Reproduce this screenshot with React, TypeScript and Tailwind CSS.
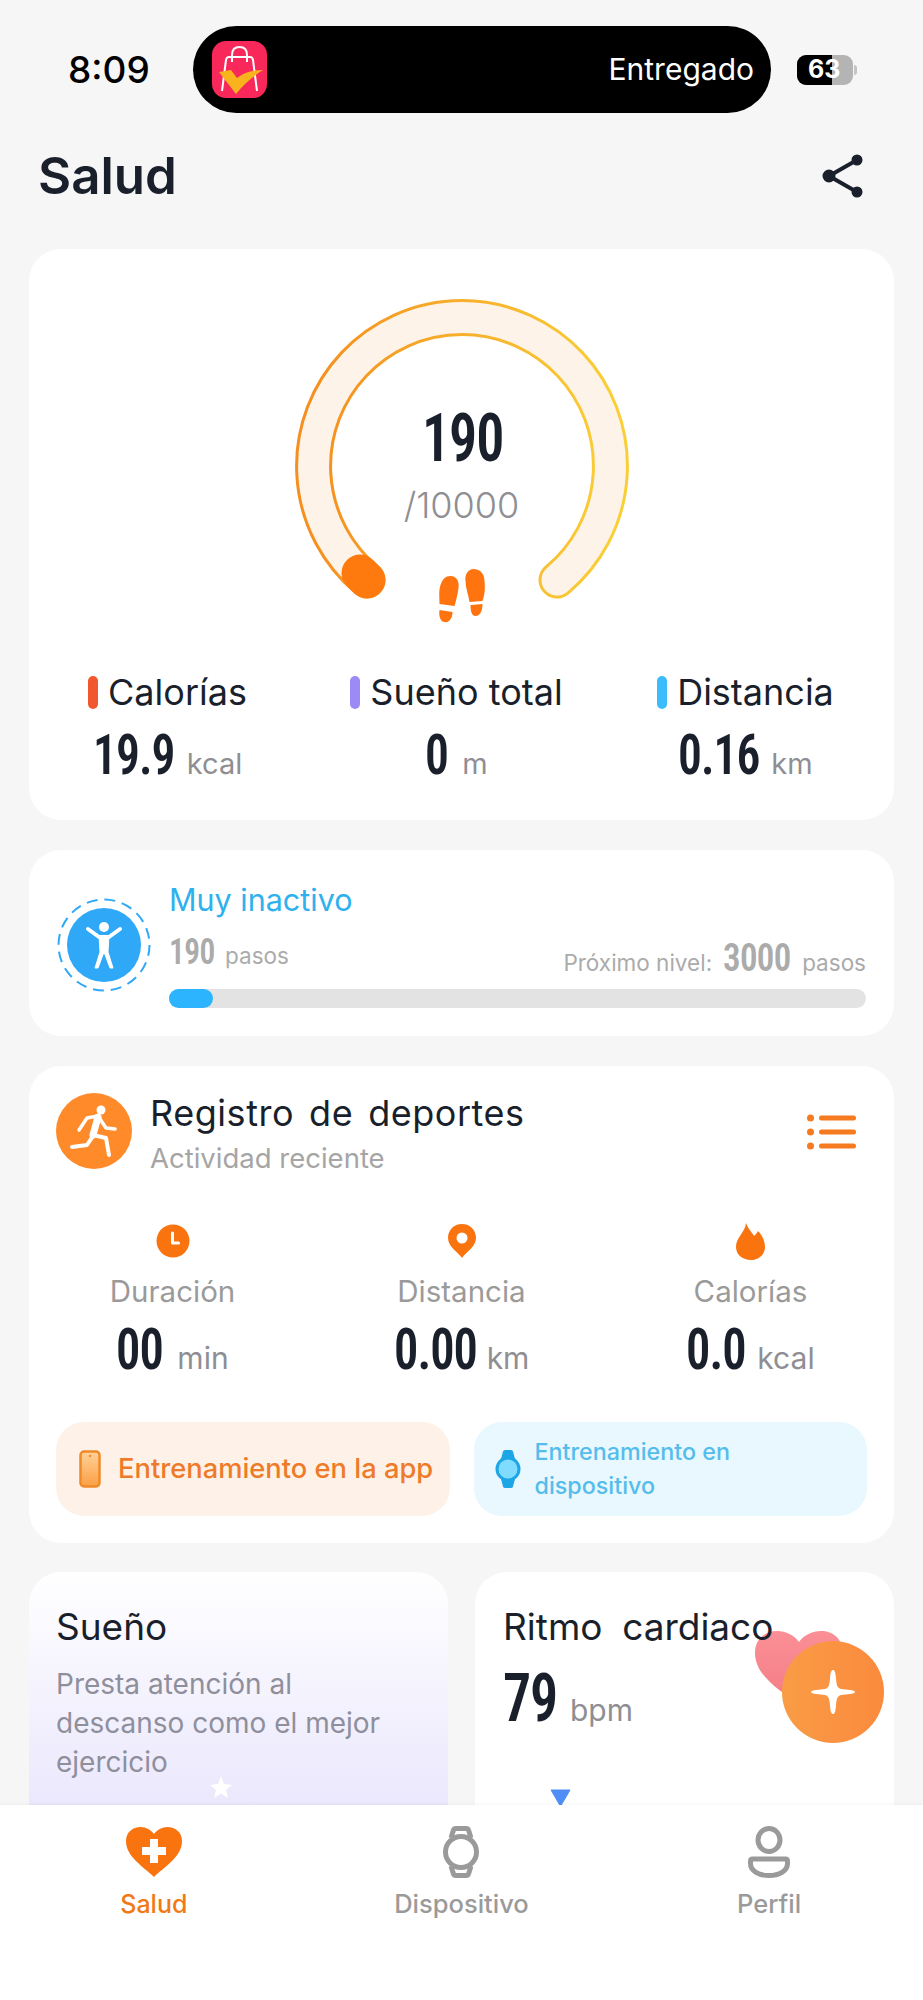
const STATS = [
  { label: 'Calorías', bar: 'bg-[#f2582f]', value: '19.9', unit: 'kcal', w: 'w-[82px]' },
  { label: 'Sueño total', bar: 'bg-[#9d8bf5]', value: '0', unit: 'm', w: 'w-[25px]' },
  { label: 'Distancia', bar: 'bg-[#3bbcfb]', value: '0.16', unit: 'km', w: 'w-[81px]' },
]

const NUM = "inline-block origin-left scale-x-[0.85] whitespace-nowrap font-['Roboto',sans-serif] font-semibold [font-stretch:75%] tracking-[-0.02em]"

function Gauge() {
  return (
    <div className="relative mx-auto mt-[47px] w-[350px] h-[340px]">
      <svg width="350" height="340" viewBox="0 0 350 340">
        <defs>
          <linearGradient id="ring" x1="0" y1="0" x2="1" y2="0">
            <stop offset="0" stopColor="#f58f1f" />
            <stop offset="1" stopColor="#f9cf38" />
          </linearGradient>
        </defs>
        <path d="M80 284 A148.4 148.4 0 1 1 270 284" fill="none" stroke="url(#ring)" strokeWidth="37" strokeLinecap="round" />
        <path d="M80 284 A148.4 148.4 0 1 1 270 284" fill="none" stroke="#fef3e8" strokeWidth="31" strokeLinecap="round" />
        <path d="M80 284 L73 277" fill="none" stroke="#ff7a0e" strokeWidth="37" strokeLinecap="round" />
        <g transform="translate(151.5 273)" fill="#ff740f">
          <path d="M12 7C18 7 21 12 20 19C19 27 17 33 16 37L1 35C1 28 0 22 2 16C4 10 7 7 12 7Z" />
          <path d="M1 41L14 43C14 49 11 54 6 53C2 53 0 47 1 41Z" />
          <path d="M35 0C42 0 46 5 46 12C47 20 46 26 44 32L31 33C30 26 27 19 27 12C26 5 30 0 35 0Z" />
          <path d="M32 36L44 35C44 41 42 47 37 47C33 47 32 42 32 36Z" />
        </g>
      </svg>
      <div className="absolute inset-x-0 top-[112px] flex flex-col items-center">
        <div className="w-[79px]">
          <span className={`${NUM} text-[66px] leading-[62px] text-[#1a1f2c]`}>190</span>
        </div>
        <div className="mt-[14px] text-[36px] leading-[42px] font-light text-[#8e8e93]">/10000</div>
      </div>
    </div>
  )
}

function StatColumns() {
  return (
    <div className="grid grid-cols-3 w-[867px] -ml-[6px] mt-[36px]">
      {STATS.map((s) => (
        <div key={s.label} className="flex flex-col items-center">
          <div className="flex items-center gap-[10px] h-[40px]">
            <span className={`w-[10px] h-[33px] rounded-full ${s.bar}`} />
            <span className="text-[36px] leading-[40px] text-[#1a1f2c]">{s.label}</span>
          </div>
          <div className="flex items-baseline gap-[12px] mt-[15px]">
            <span className={s.w}>
              <span className={`${NUM} text-[56px] leading-[56px] text-[#1a1f2c]`}>{s.value}</span>
            </span>
            <span className="text-[29px] leading-[36px] text-[#8e8e93]">{s.unit}</span>
          </div>
        </div>
      ))}
    </div>
  )
}

function ActivityLevel() {
  return (
    <section className="bg-white rounded-[32px] h-[186px] mt-[30px] flex pl-[28px] pr-[28px]">
      <svg className="mt-[48px] shrink-0" width="94" height="94" viewBox="0 0 94 94">
        <circle cx="47" cy="47" r="45.5" fill="none" stroke="#2fa8f8" strokeWidth="2" strokeDasharray="11 6.87" />
        <circle cx="47" cy="47" r="37" fill="#2fa8f8" />
        <circle cx="47" cy="29" r="5" fill="#fff" />
        <path d="M31 31L42 39H52L63 31" fill="none" stroke="#fff" strokeWidth="4" strokeLinecap="round" strokeLinejoin="round" />
        <path d="M42 38H52L51 54L56 70H53L47 54L41 70H38L43 54Z" fill="#fff" strokeLinejoin="round" stroke="#fff" />
      </svg>
      <div className="ml-[18px] flex-1 flex flex-col">
        <div className="mt-[32px] text-[30.5px] leading-[36px] text-[#2fb1ee]">Muy inactivo</div>
        <div className="flex items-end justify-between mt-[15px] h-[47px]">
          <div className="flex items-baseline gap-[11px] self-start">
            <span className="w-[45px]">
              <span className={`${NUM} text-[37px] leading-[38px] text-[#ababab]`}>190</span>
            </span>
            <span className="text-[22.5px] text-[#ababab]">pasos</span>
          </div>
          <div className="flex items-baseline gap-[11px]">
            <span className="text-[22.5px] text-[#ababab]">Próximo nivel:</span>
            <span className="w-[68px]">
              <span className={`${NUM} scale-x-[0.92] text-[38px] leading-[36px] text-[#ababab]`}>3000</span>
            </span>
            <span className="text-[22.5px] text-[#ababab]">pasos</span>
          </div>
        </div>
        <div className="mt-[9px] h-[19px] rounded-full bg-[#e3e3e3]">
          <div className="h-[19px] w-[44px] rounded-full bg-[#2db4ff]" />
        </div>
      </div>
    </section>
  )
}

function ClockIcon() {
  return (
    <svg width="34" height="34" viewBox="0 0 34 34">
      <circle cx="17" cy="17" r="16.5" fill="#f9730f" />
      <path d="M17 9V19H23" transform="translate(-0.5 0)" fill="none" stroke="#fff" strokeWidth="3" strokeLinecap="round" strokeLinejoin="round" />
    </svg>
  )
}

function PinIcon() {
  return (
    <svg width="30" height="34" viewBox="0 0 30 34">
      <path d="M15 34C12 29 1 23 1 14C1 6 7 0 15 0C23 0 29 6 29 14C29 23 18 29 15 34Z" fill="#f9730f" />
      <circle cx="15" cy="14" r="5.5" fill="#fff" />
    </svg>
  )
}

function FlameIcon() {
  return (
    <svg width="29" height="37" viewBox="0 0 29 37">
      <path d="M10 0C12 6 16 9 18 13C20 11 21 10 22 8C26 12 29 18 29 24C29 32 22 37 15 37C7 37 0 32 0 24C0 14 9 10 10 0Z" fill="#f9730f" />
    </svg>
  )
}

function Sports() {
  const rows = [
    { icon: <ClockIcon />, label: 'Duración', value: '00', unit: 'min', w: 'w-[50px]' },
    { icon: <PinIcon />, label: 'Distancia', value: '0.00', unit: 'km', w: 'w-[82px]' },
    { icon: <FlameIcon />, label: 'Calorías', value: '0.0', unit: 'kcal', w: 'w-[60px]' },
  ]
  return (
    <section className="bg-white rounded-[32px] h-[477px] mt-[30px] px-[27px] flex flex-col">
      <div className="flex mt-[27px]">
        <div className="w-[76px] h-[76px] rounded-full bg-[#ff8a2a] shrink-0">
          <svg width="76" height="76" viewBox="0 0 76 76" fill="none" stroke="#fff" strokeLinecap="round" strokeLinejoin="round">
            <circle cx="45" cy="17" r="4.500" fill="#fff" stroke="none" />
            <path d="M42 24L37 42" strokeWidth="7" />
            <path d="M23 37L31 25L42 23L50 35L59 36" strokeWidth="3.500" />
            <path d="M37 42L50 45L53 62" strokeWidth="4" />
            <path d="M37 43L31 52L16 54" strokeWidth="4" />
          </svg>
        </div>
        <div className="ml-[18px] flex-1">
          <div className="text-[36px] leading-[40px] text-[#1a1f2c] tracking-[0.015em] [word-spacing:0.12em]">Registro de deportes</div>
          <div className="text-[27.5px] leading-[34px] mt-[8px] text-[#a5a5a5]">Actividad reciente</div>
        </div>
        <svg className="mt-[21px] mr-[11px]" width="49" height="36" viewBox="0 0 49 36" fill="#f57a20">
          <circle cx="3.500" cy="4" r="3.500" />
          <circle cx="3.500" cy="18" r="3.500" />
          <circle cx="3.500" cy="32" r="3.500" />
          <rect x="12" y="1.500" width="37" height="5" rx="2.500" />
          <rect x="12" y="15.500" width="37" height="5" rx="2.500" />
          <rect x="12" y="29.500" width="37" height="5" rx="2.500" />
        </svg>
      </div>
      <div className="grid grid-cols-3 w-[867px] -ml-[28px] mt-[46px]">
        {rows.map((r) => (
          <div key={r.label} className="flex flex-col items-center">
            <div className="h-[40px] flex items-center">{r.icon}</div>
            <div className="mt-[12px] text-[29.5px] leading-[36px] text-[#9a9a9a]">{r.label}</div>
            <div className="flex items-baseline gap-[11px] mt-[13px]">
              <span className={r.w}>
                <span className={`${NUM} text-[57px] leading-[56px] text-[#1a1f2c]`}>{r.value}</span>
              </span>
              <span className="text-[30px] text-[#8e8e93]">{r.unit}</span>
            </div>
          </div>
        ))}
      </div>
      <div className="grid grid-cols-2 gap-[24px] mt-[41px]">
        <div className="h-[94px] rounded-[28px] bg-[#fef2e8] flex items-center pl-[23px]">
          <svg width="22" height="38" viewBox="0 0 22 38">
            <defs>
              <linearGradient id="phone" x1="0" y1="0" x2="0" y2="1">
                <stop offset="0" stopColor="#ffd29a" />
                <stop offset="1" stopColor="#fb9f44" />
              </linearGradient>
            </defs>
            <rect x="1.500" y="1.500" width="19" height="35" rx="3.500" fill="url(#phone)" stroke="#ef8a28" strokeWidth="2.500" />
            <circle cx="11" cy="6" r="1.200" fill="#ef8a28" />
          </svg>
          <span className="ml-[17px] text-[27.3px] font-medium text-[#ee7b2a] whitespace-nowrap">Entrenamiento en la app</span>
        </div>
        <div className="h-[94px] rounded-[28px] bg-[#e9f7fe] flex items-center pl-[21px]">
          <svg width="26" height="38" viewBox="0 0 26 38">
            <path d="M6 9L8 1.500Q8.500 0 10 0H16Q17.500 0 18 1.500L20 9V29L18 36.500Q17.500 38 16 38H10Q8.500 38 8 36.500L6 29Z" fill="#1ca6e6" />
            <circle cx="13" cy="19" r="12.500" fill="#1ca6e6" />
            <circle cx="13" cy="19" r="9.500" fill="#7fdcff" />
          </svg>
          <span className="ml-[14px] text-[23.3px] leading-[34px] font-medium text-[#55bdeb]">
            Entrenamiento en<br />dispositivo
          </span>
        </div>
      </div>
    </section>
  )
}

function BottomCards() {
  return (
    <div className="grid grid-cols-2 gap-[27px] mt-[29px]">
      <section className="h-[400px] rounded-t-[32px] px-[27px] pt-[33px] bg-gradient-to-b from-white to-[#dcd7fa]">
        <div className="text-[37px] leading-[44px] text-[#1a1f2c]">Sueño</div>
        <div className="mt-[16px] text-[28px] leading-[39px] text-[#8f8f9c]">
          Presta atención al<br />descanso como el mejor<br />ejercicio
        </div>
        <svg className="ml-[153px] mt-[-7px]" width="24" height="24" viewBox="0 0 24 24" fill="#fff">
          <path d="M12 1L15 9L23 10L17 15L19 23L12 18.500L5 23L7 15L1 10L9 9Z" />
        </svg>
      </section>
      <section className="h-[400px] rounded-t-[32px] pl-[28px] pt-[33px] bg-white relative">
        <div className="text-[37px] leading-[44px] text-[#1a1f2c] relative z-10 whitespace-nowrap [word-spacing:0.25em]">Ritmo cardiaco</div>
        <div className="flex items-baseline gap-[12px] mt-[19px]">
          <span className="w-[55px]">
            <span className={`${NUM} text-[66px] leading-[62px] text-[#1a1f2c]`}>79</span>
          </span>
          <span className="text-[30px] text-[#8e8e93]">bpm</span>
        </div>
        <svg className="absolute left-[280px] top-[59px]" width="88" height="72" viewBox="0 0 88 72">
          <defs>
            <linearGradient id="heart" x1="0" y1="0" x2="0" y2="1">
              <stop offset="0" stopColor="#fb8f96" />
              <stop offset="1" stopColor="#f47d86" />
            </linearGradient>
          </defs>
          <path d="M44 72C20 58 0 42 0 22C0 8 10 0 22 0C31 0 39 4 44 11C49 4 57 0 66 0C78 0 88 8 88 22C88 42 68 58 44 72Z" fill="url(#heart)" />
        </svg>
        <svg className="ml-[47px] mt-[56px]" width="21" height="17" viewBox="0 0 21 17">
          <path d="M1 1H20L11 16.500H10Z" fill="#4f8ef5" stroke="#4f8ef5" strokeLinejoin="round" />
        </svg>
      </section>
    </div>
  )
}

function TabBar() {
  return (
    <nav className="h-[195px] shrink-0 bg-white grid grid-cols-3 shadow-[0_-1px_3px_rgba(0,0,0,0.04)] relative z-10">
      <div className="flex flex-col items-center pt-[22px]">
        <svg width="56" height="50" viewBox="0 0 56 50">
          <path d="M28 50C18 40 0 30 0 14C0 5 7 0 14.500 0C20 0 25 3 28 7C31 3 36 0 41.500 0C49 0 56 5 56 14C56 30 38 40 28 50Z" fill="#f9730f" />
          <path d="M24 12H32V20H40V28H32V36H24V28H16V20H24Z" fill="#fff" strokeLinejoin="round" />
        </svg>
        <span className="mt-[11px] text-[25px] leading-[32px] font-medium text-[#f07a18]">Salud</span>
      </div>
      <div className="flex flex-col items-center pt-[21px]">
        <svg width="38" height="52" viewBox="0 0 38 52" fill="none" stroke="#9a9a9a" strokeWidth="5">
          <circle cx="19" cy="26" r="15.500" />
          <path d="M9 12L11.500 4Q12 2.500 14 2.500H24Q26 2.500 26.500 4L29 12" strokeLinejoin="round" />
          <path d="M9 40L11.500 48Q12 49.500 14 49.500H24Q26 49.500 26.500 48L29 40" strokeLinejoin="round" />
        </svg>
        <span className="mt-[10px] text-[25.500px] leading-[32px] font-medium text-[#9a9a9a]">Dispositivo</span>
      </div>
      <div className="flex flex-col items-center pt-[21px]">
        <svg width="42" height="52" viewBox="0 0 42 52" fill="none" stroke="#9a9a9a" strokeWidth="5">
          <ellipse cx="21" cy="14" rx="11" ry="11.500" />
          <path d="M2.500 37.500V35Q2.500 33 4.500 33H37.500Q39.500 33 39.500 35V37.500C39.500 45 31 49.500 21 49.500C11 49.500 2.500 45 2.500 37.500Z" strokeLinejoin="round" />
        </svg>
        <span className="mt-[10px] text-[25.500px] leading-[32px] font-medium text-[#9a9a9a]">Perfil</span>
      </div>
    </nav>
  )
}

export default function App() {
  return (
    <div className="relative w-[923px] h-[2000px] overflow-hidden flex flex-col bg-[#f6f6f7] font-['Inter','Noto_Sans',sans-serif]">
      <main className="flex-1 overflow-hidden">
        <header className="flex items-center h-[87px] mt-[26px] pl-[68px]">
          <span className="w-[125px] text-[37px] font-medium text-black">8:09</span>
          <div className="w-[578px] h-[87px] rounded-full bg-black flex items-center justify-between pl-[19px] pr-[17px]">
            <svg width="55" height="57" viewBox="0 0 55 57">
              <rect width="55" height="57" rx="14" fill="#f9285a" />
              <path d="M10 50L14 19Q14.500 16 17 16H38Q40.500 16 41 19L45 50" fill="none" stroke="#fff" strokeWidth="2" />
              <path d="M20 21V14Q20 6 27.500 6Q35 6 35 14V21" fill="none" stroke="#fff" strokeWidth="2" />
              <path d="M7 31L19 29L25 37C31 32 39 29 51 29C41 35 32 43 24 53Z" fill="#f9b31d" />
            </svg>
            <span className="text-[30px] text-white">Entregado</span>
          </div>
          <div className="relative ml-[26px] w-[56px] h-[30px] rounded-[9px] overflow-hidden bg-[#b4b4b4]">
            <div className="h-full w-[35px] bg-black" />
            <span className="absolute inset-y-0 left-[11px] flex items-center text-[25px] font-bold text-white">63</span>
          </div>
          <span className="ml-[1px] w-[3px] h-[10px] rounded-r bg-[#c4c4c4]" />
        </header>

        <div className="flex items-center justify-between pl-[38px] pr-[59px] mt-[38px] h-[50px]">
          <h1 className="text-[51px] leading-[50px] font-semibold text-[#1a1f2c]">Salud</h1>
          <svg width="42" height="44" viewBox="0 0 42 44" fill="#1a1f2c" stroke="#1a1f2c" strokeWidth="4">
            <path d="M35 6L7 22L35 38" fill="none" />
            <circle cx="35" cy="6" r="3.500" />
            <circle cx="7" cy="22" r="4.500" />
            <circle cx="35" cy="38" r="3.500" />
          </svg>
        </div>

        <div className="mx-[29px] mt-[48px]">
          <section className="bg-white rounded-[32px] h-[571px] overflow-hidden">
            <Gauge />
            <StatColumns />
          </section>
          <ActivityLevel />
          <Sports />
          <BottomCards />
        </div>
      </main>
      <TabBar />

      <div className="absolute left-[782px] top-[1641px] z-20 w-[102px] h-[102px] rounded-full bg-gradient-to-r from-[#f99c46] to-[#fb8a3d] flex items-center justify-center">
        <svg width="44" height="44" viewBox="0 0 44 44" fill="#fff">
          <path d="M22 0C23.500 0 24.500 2 25 8C25.300 14 26 18 30 19C35 19.500 44 20 44 22C44 24 35 24.500 30 25C26 26 25.300 30 25 36C24.500 42 23.500 44 22 44C20.500 44 19.500 42 19 36C18.700 30 18 26 14 25C9 24.500 0 24 0 22C0 20 9 19.500 14 19C18 18 18.700 14 19 8C19.500 2 20.500 0 22 0Z" />
        </svg>
      </div>
    </div>
  )
}
